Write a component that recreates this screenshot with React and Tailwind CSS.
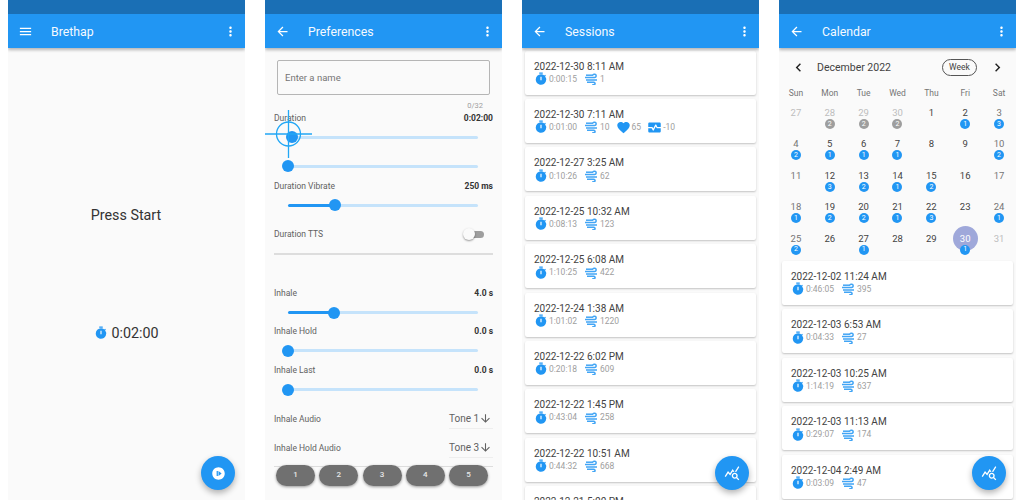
import { MdMenu, MdArrowBack, MdMoreVert, MdTimer, MdFavorite, MdMonitorHeart, MdQueryStats, MdNotStarted, MdArrowDownward, MdChevronLeft, MdChevronRight } from 'react-icons/md';

const sessions = [
    { date: '2022-12-30 8:11 AM', time: '0:00:15', breaths: '1' },
    { date: '2022-12-30 7:11 AM', time: '0:01:00', breaths: '10', heart: '65', hrv: '-10' },
    { date: '2022-12-27 3:25 AM', time: '0:10:26', breaths: '62' },
    { date: '2022-12-25 10:32 AM', time: '0:08:13', breaths: '123' },
    { date: '2022-12-25 6:08 AM', time: '1:10:25', breaths: '422' },
    { date: '2022-12-24 1:38 AM', time: '1:01:02', breaths: '1220' },
    { date: '2022-12-22 6:02 PM', time: '0:20:18', breaths: '609' },
    { date: '2022-12-22 1:45 PM', time: '0:43:04', breaths: '258' },
    { date: '2022-12-22 10:51 AM', time: '0:44:32', breaths: '668' },
    { date: '2022-12-21 5:00 PM', time: '0:12:00', breaths: '90' },
];

const calendarSessions = [
    { date: '2022-12-02 11:24 AM', time: '0:46:05', breaths: '395' },
    { date: '2022-12-03 6:53 AM', time: '0:04:33', breaths: '27' },
    { date: '2022-12-03 10:25 AM', time: '1:14:19', breaths: '637' },
    { date: '2022-12-03 11:13 AM', time: '0:29:07', breaths: '174' },
    { date: '2022-12-04 2:49 AM', time: '0:03:09', breaths: '47' },
];

const weekDays = ['Sun', 'Mon', 'Tue', 'Wed', 'Thu', 'Fri', 'Sat'];

const days = [
    { n: 27, muted: true }, { n: 28, muted: true, count: 2 }, { n: 29, muted: true, count: 2 }, { n: 30, muted: true, count: 2 }, { n: 1 }, { n: 2, count: 1 }, { n: 3, count: 3 },
    { n: 4, count: 2 }, { n: 5, count: 1 }, { n: 6, count: 1 }, { n: 7, count: 1 }, { n: 8 }, { n: 9 }, { n: 10, count: 2 },
    { n: 11 }, { n: 12, count: 3 }, { n: 13, count: 2 }, { n: 14, count: 1 }, { n: 15, count: 2 }, { n: 16 }, { n: 17 },
    { n: 18, count: 1 }, { n: 19, count: 2 }, { n: 20, count: 2 }, { n: 21, count: 1 }, { n: 22, count: 3 }, { n: 23 }, { n: 24, count: 1 },
    { n: 25, count: 2 }, { n: 26 }, { n: 27, count: 1 }, { n: 28 }, { n: 29 }, { n: 30, count: 1, selected: true }, { n: 31, muted: true },
];

const WindIcon = () => (
    <svg width="13" height="12" viewBox="0 0 13 12" fill="none" stroke="#42a5f5" strokeWidth="1.5" className="ml-[8px] shrink-0">
        <path d="M1 2.2H8" />
        <path d="M0 4.6H9.5a1.7 1.7 0 1 0-1.6-2.4" />
        <path d="M1 7H12" />
        <path d="M2 9.2H8.8a1.3 1.3 0 1 1-1.2 1.9" />
    </svg>
);

const AppBar = ({ title, icon: Icon }) => (
    <div className="relative z-10 shrink-0 shadow-[0_2px_3px_rgba(0,0,0,0.28)]">
        <div className="h-[14px] bg-[#1a6fb5]" />
        <div className="h-[34px] bg-[#2196f3] flex items-center text-white">
            <div className="w-[34px] pl-[10px]">
                <Icon size={15} />
            </div>
            <div className="ml-[9px] flex-1 pt-[2px] text-[12.3px] text-[#f5faff]">{title}</div>
            <MdMoreVert size={15} className="mr-[7px]" />
        </div>
    </div>
);

const Fab = ({ icon: Icon, size }) => (
    <div className="absolute right-[10px] bottom-[10px] z-20 w-[34px] h-[34px] rounded-full bg-[#2196f3] flex items-center justify-center text-white shadow-[0_3px_6px_rgba(0,0,0,0.3)]">
        <Icon size={size} />
    </div>
);

const Screen = ({ children }) => (
    <div className="relative w-[237px] h-[500px] shrink-0 overflow-hidden bg-[#fafafa] flex flex-col">
        {children}
    </div>
);

const SessionCard = ({ session }) => (
    <div className="h-[44px] shrink-0 mx-[3px] mb-[4.4px] pl-[9px] pt-[9px] bg-white rounded-[2px] shadow-[0_1px_2px_rgba(0,0,0,0.22)]">
        <div className="text-[10px] leading-[13px] text-[#424242]">{session.date}</div>
        <div className="flex items-center h-[13px] pl-[1px] text-[8.5px] text-[#9e9e9e]">
            <MdTimer size={14} className="text-[#2196f3] -ml-[1px]" />
            <span className="ml-[1px] w-[28px]">{session.time}</span>
            <WindIcon />
            <span className="ml-[2px]">{session.breaths}</span>
            {session.heart && (
                <>
                    <MdFavorite size={15} className="ml-[6px] text-[#2196f3]" />
                    <span className="ml-[1px]">{session.heart}</span>
                    <MdMonitorHeart size={15} className="ml-[6px] text-[#2196f3]" />
                    <span className="ml-[1px]">{session.hrv}</span>
                </>
            )}
        </div>
    </div>
);

const Slider = ({ value, className }) => (
    <div className={`ml-[14px] w-[190px] h-[12px] flex items-center ${className}`}>
        <div className="h-[3px] bg-[#2196f3] rounded-l-full" style={{ width: value }} />
        <div className="w-[12px] h-[12px] -mx-[6px] rounded-full bg-[#2196f3] shrink-0 relative" />
        <div className="flex-1 h-[3px] bg-[#c5e3fb] rounded-r-full" />
    </div>
);

const Row = ({ label, value, className }) => (
    <div className={`flex justify-between items-center h-[12px] text-[8.5px] text-[#616161] ${className}`}>
        <span>{label}</span>
        {value && <span className="font-bold text-[#333333]">{value}</span>}
    </div>
);

const Select = ({ label, value, className }) => (
    <div className={`flex justify-between h-[19px] text-[8.5px] text-[#616161] ${className}`}>
        <span className="pt-[3px]">{label}</span>
        <div className="w-[44px] h-[19px] border-b border-[#eeeeee] flex items-center justify-between text-[10px] text-[#616161]">
            <span className="whitespace-nowrap">{value}</span>
            <MdArrowDownward size={13} className="mr-[1px] shrink-0" />
        </div>
    </div>
);

const Home = () => (
    <Screen>
        <AppBar title="Brethap" icon={MdMenu} />
        <div className="flex flex-col items-center text-[#333333] text-[14.3px]">
            <div className="mt-[158px] leading-[18px] -ml-[1px]">Press Start</div>
            <div className="mt-[100px] flex items-center leading-[18px]">
                <MdTimer size={14} className="text-[#2196f3] mr-[3px]" />
                0:02:00
            </div>
        </div>
        <Fab icon={MdNotStarted} size={15} />
    </Screen>
);

const Preferences = () => (
    <Screen>
        <AppBar title="Preferences" icon={MdArrowBack} />
        <div className="px-[9px]">
            <div className="mt-[12px] mx-[3px] h-[35px] border border-[#b5b5b5] rounded-[2px] pl-[7px] pt-[1px] flex items-center text-[9.5px] text-[#757575]">
                Enter a name
            </div>
            <div className="mt-[6px] h-[10px] pr-[10px] text-right text-[7.5px] leading-[10px] text-[#9e9e9e]">0/32</div>
            <Row label="Duration" value="0:02:00" className="mt-[1px]" />
            <Slider value={4} className="mt-[7px]" />
            <Slider value={0} className="mt-[17px]" />
            <Row label="Duration Vibrate" value="250 ms" className="mt-[8px]" />
            <Slider value={47} className="mt-[7px]" />
            <div className="mt-[17px] h-[12px] flex items-center justify-between text-[8.5px] text-[#616161]">
                <span>Duration TTS</span>
                <div className="flex items-center mr-[13px]">
                    <div className="w-[16px] h-[7px] rounded-full bg-[#9e9e9e]" />
                    <div className="w-[12px] h-[12px] -ml-[21px] rounded-full bg-[#fafafa] shadow-[0_1px_2px_rgba(0,0,0,0.4)]" />
                    <div className="w-[5px]" />
                </div>
            </div>
            <div className="mt-[13px] h-[1.5px] bg-[#dddddd]" />
            <Row label="Inhale" value="4.0 s" className="mt-[33px]" />
            <Slider value={46} className="mt-[7px]" />
            <Row label="Inhale Hold" value="0.0 s" className="mt-[7px]" />
            <Slider value={0} className="mt-[7px]" />
            <Row label="Inhale Last" value="0.0 s" className="mt-[8px]" />
            <Slider value={0} className="mt-[7px]" />
            <Select label="Inhale Audio" value="Tone 1" className="mt-[14px]" />
            <Select label="Inhale Hold Audio" value="Tone 3" className="mt-[10px]" />
            <div className="mt-[8px] h-[1px] bg-[#dddddd]" />
            <div className="-mt-[2px] flex justify-between px-[2px] pr-[5px]">
                {[1, 2, 3, 4, 5].map((n) => (
                    <div key={n} className="w-[39px] h-[21px] rounded-full bg-[#707070] flex items-center justify-center text-[8px] font-medium text-[#e8e8e8] shadow-[0_1px_3px_rgba(0,0,0,0.4)]">
                        {n}
                    </div>
                ))}
            </div>
        </div>
        {/* crosshair touch marker */}
        <svg className="absolute left-0 top-[110px] z-20" width="48" height="50" viewBox="0 0 48 50" fill="none" stroke="#22a7f5" strokeWidth="1.3">
            <circle cx="23.5" cy="24" r="12" />
            <path d="M0 24H47M23.5 0V48" />
        </svg>
    </Screen>
);

const Sessions = () => (
    <Screen>
        <AppBar title="Sessions" icon={MdArrowBack} />
        <div className="pt-[2.6px] flex flex-col">
            {sessions.map((s) => (
                <SessionCard key={s.date} session={s} />
            ))}
        </div>
        <Fab icon={MdQueryStats} size={16} />
    </Screen>
);

const Calendar = () => (
    <Screen>
        <AppBar title="Calendar" icon={MdArrowBack} />
        <div className="flex items-center h-[22px] mt-[11px] text-[#424242]">
            <MdChevronLeft size={17} className="ml-[11px] text-[#222222]" />
            <span className="ml-[10px] text-[10.5px]">December 2022</span>
            <div className="ml-[51px] w-[35px] h-[17px] border border-[#555555] rounded-full flex items-center justify-center text-[8.5px]">Week</div>
            <MdChevronRight size={17} className="ml-[12px] text-[#222222]" />
        </div>
        <div className="grid grid-cols-7 mt-[10px]">
            {weekDays.map((d) => (
                <div key={d} className="text-center text-[8.5px] leading-[14px] text-[#757575]">{d}</div>
            ))}
        </div>
        <div className="grid grid-cols-7 auto-rows-[31.4px] mt-[6px] h-[157px]">
            {days.map((d, i) => (
                <div key={i} className="relative flex flex-col items-center pt-[1px]">
                    {d.selected && <div className="absolute top-[-6px] w-[25px] h-[25px] rounded-full bg-[#9fa8da]" />}
                    <span className={`relative text-[9.5px] leading-[12px] ${d.selected ? 'text-white' : d.muted ? 'text-[#bdbdbd]' : i % 7 === 0 || i % 7 === 6 ? 'text-[#757575]' : 'text-[#424242]'}`}>
                        {d.n}
                    </span>
                    {d.count && (
                        <span className={`relative w-[10px] h-[10px] rounded-full flex items-center justify-center text-[7px] text-white ${d.muted ? 'bg-[#9e9e9e]' : 'bg-[#2196f3]'}`}>
                            {d.count}
                        </span>
                    )}
                </div>
            ))}
        </div>
        <div className="flex flex-col -mt-[2px]">
            {calendarSessions.map((s) => (
                <SessionCard key={s.date} session={s} />
            ))}
        </div>
        <Fab icon={MdQueryStats} size={16} />
    </Screen>
);

export default function App() {
    return (
        <div className="w-[1024px] h-[500px] overflow-hidden bg-white flex gap-[20px] pl-[8px] font-['Roboto',sans-serif]">
            <Home />
            <Preferences />
            <Sessions />
            <Calendar />
        </div>
    );
}
